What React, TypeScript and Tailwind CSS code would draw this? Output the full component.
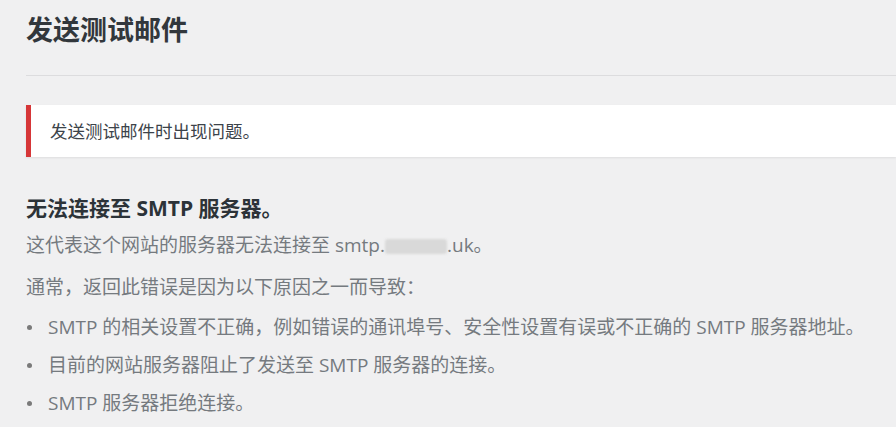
const font = {
  fontFamily: '"Open Sans", "Noto Sans CJK SC", sans-serif',
};

const reasons = [
  "SMTP 的相关设置不正确，例如错误的通讯埠号、安全性设置有误或不正确的 SMTP 服务器地址。",
  "目前的网站服务器阻止了发送至 SMTP 服务器的连接。",
  "SMTP 服务器拒绝连接。",
];

export default function App() {
  return (
    <div
      className="min-h-[427px] w-full overflow-hidden bg-[#f0f0f1] pl-[26px] pt-[12px]"
      style={font}
    >
      <h1 className="text-[27px] font-bold leading-[36px] text-[#32373c]">
        发送测试邮件
      </h1>

      <div className="mt-[27px] border-t border-[#dcdcde]" />

      <div className="mt-[29px] flex h-[52px] items-center border-l-[5px] border-[#d63638] bg-white pl-[19px] shadow-[0_1px_2px_rgba(0,0,0,0.08)]">
        <p className="text-[17.5px] leading-[24px] text-[#3c434a]">
          发送测试邮件时出现问题。
        </p>
      </div>

      <h2 className="mt-[36px] text-[21px] font-bold leading-[30px] text-[#2c3338]">
        无法连接至 SMTP 服务器。
      </h2>

      <p className="mt-[7px] text-[19px] leading-[30px] text-[#757a7f]">
        这代表这个网站的服务器无法连接至 smtp.
        <span className="inline-block h-[15px] w-[62px] translate-y-[2px] rounded-[3px] bg-[#d9d9d9] blur-[1px]" />
        .uk。
      </p>

      <p className="mt-[12px] text-[19px] leading-[30px] text-[#757a7f]">
        通常，返回此错误是因为以下原因之一而导致：
      </p>

      <ul className="mt-[10px] flex flex-col gap-[8px]">
        {reasons.map((r) => (
          <li key={r} className="flex items-center">
            <span className="ml-[1px] h-[5px] w-[5px] shrink-0 rounded-full bg-[#7a7a7a]" />
            <span className="ml-[16px] whitespace-nowrap text-[19px] leading-[30px] text-[#757a7f]">
              {r}
            </span>
          </li>
        ))}
      </ul>
    </div>
  );
}
